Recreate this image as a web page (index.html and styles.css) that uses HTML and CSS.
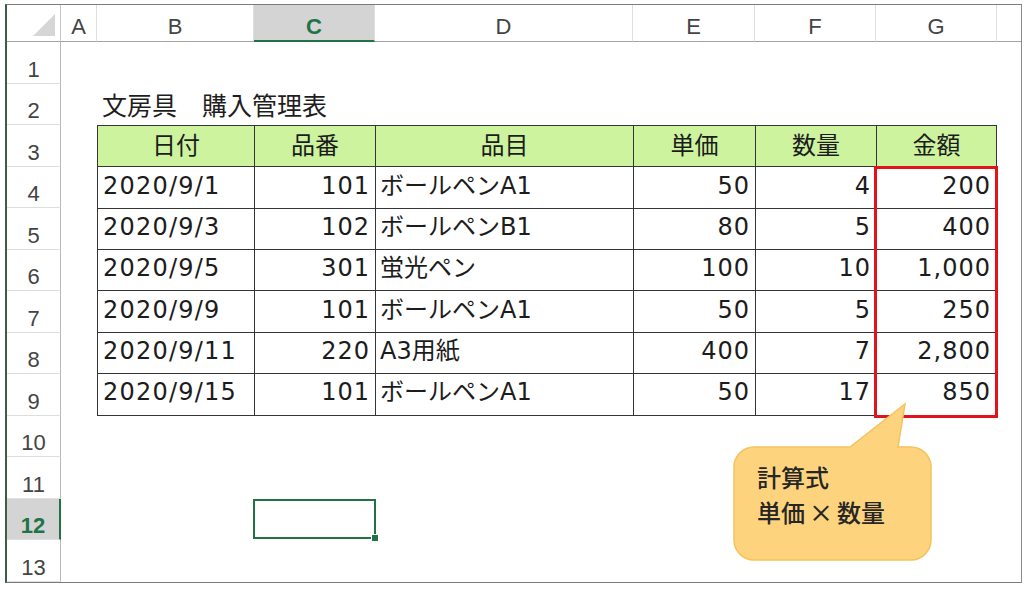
FILE: index.html
```html
<!DOCTYPE html>
<html lang="ja">
<head>
<meta charset="utf-8">
<title>文房具 購入管理表</title>
<link rel="stylesheet" href="styles.css">
</head>
<body>
<div class="frame">
  <div class="sheet">
    <div class="corner"><span class="tri"></span></div>
    <div class="colhdr">A</div>
    <div class="colhdr">B</div>
    <div class="colhdr active">C</div>
    <div class="colhdr">D</div>
    <div class="colhdr">E</div>
    <div class="colhdr">F</div>
    <div class="colhdr">G</div>
    <div class="colhdr last"></div>

    <div class="rowhdr">1</div>
    <div class="rowhdr">2</div>
    <div class="rowhdr">3</div>
    <div class="rowhdr">4</div>
    <div class="rowhdr">5</div>
    <div class="rowhdr">6</div>
    <div class="rowhdr">7</div>
    <div class="rowhdr">8</div>
    <div class="rowhdr">9</div>
    <div class="rowhdr">10</div>
    <div class="rowhdr">11</div>
    <div class="rowhdr active">12</div>
    <div class="rowhdr">13</div>

    <div class="title">文房具　購入管理表</div>

    <div class="table">
      <div class="th">日付</div>
      <div class="th">品番</div>
      <div class="th">品目</div>
      <div class="th">単価</div>
      <div class="th">数量</div>
      <div class="th">金額</div>

      <div class="td num-l">2020/9/1</div>
      <div class="td num">101</div>
      <div class="td txt">ボールペンA1</div>
      <div class="td num">50</div>
      <div class="td num">4</div>
      <div class="td num">200</div>

      <div class="td num-l">2020/9/3</div>
      <div class="td num">102</div>
      <div class="td txt">ボールペンB1</div>
      <div class="td num">80</div>
      <div class="td num">5</div>
      <div class="td num">400</div>

      <div class="td num-l">2020/9/5</div>
      <div class="td num">301</div>
      <div class="td txt">蛍光ペン</div>
      <div class="td num">100</div>
      <div class="td num">10</div>
      <div class="td num">1,000</div>

      <div class="td num-l">2020/9/9</div>
      <div class="td num">101</div>
      <div class="td txt">ボールペンA1</div>
      <div class="td num">50</div>
      <div class="td num">5</div>
      <div class="td num">250</div>

      <div class="td num-l">2020/9/11</div>
      <div class="td num">220</div>
      <div class="td txt">A3用紙</div>
      <div class="td num">400</div>
      <div class="td num">7</div>
      <div class="td num">2,800</div>

      <div class="td num-l">2020/9/15</div>
      <div class="td num">101</div>
      <div class="td txt">ボールペンA1</div>
      <div class="td num">50</div>
      <div class="td num">17</div>
      <div class="td num">850</div>
    </div>

    <div class="redbox"></div>

    <div class="selection"><span class="handle"></span></div>

    <div class="callout">
      <svg class="callout-shape" width="200" height="160" viewBox="0 0 200 160">
        <path d="M 21 45 H 117 L 172 2 L 165 45 H 178 A 20 20 0 0 1 198 65 V 138 A 20 20 0 0 1 178 158 H 21 A 20 20 0 0 1 1 138 V 65 A 20 20 0 0 1 21 45 Z" fill="#fdd47d" stroke="#f4c25e" stroke-width="1.5"/>
      </svg>
      <div class="callout-text">
        <div>計算式</div>
        <div>単価<span class="times">×</span>数量</div>
      </div>
    </div>
  </div>
</div>
</body>
</html>
```

FILE: styles.css
```css
html, body {
  margin: 0;
  padding: 0;
  background: #ffffff;
}

.frame {
  margin: 4px 0 0 5px;
  width: 1014px;
  border-top: 1px solid #7c7c7c;
  border-right: 1px solid #8a8a8a;
  border-bottom: 1px solid #7c7c7c;
  border-left: 2px solid #3e5c48;
}

.sheet {
  position: relative;
  display: grid;
  grid-template-columns: 54px 36px 157px 121px 258px 122px 121px 121px 1fr;
  grid-template-rows: 37px repeat(13, 41.5px);
  background: #ffffff;
}

.corner {
  grid-row: 1;
  display: flex;
  justify-content: flex-end;
  align-items: flex-end;
  padding: 0 5px 5px 0;
  border-right: 1px solid #c6c6c6;
  border-bottom: 1px solid #a3a3a3;
  box-sizing: border-box;
}

.tri {
  width: 22px;
  height: 22px;
  background: #d6d6d6;
  clip-path: polygon(100% 0, 100% 100%, 0 100%);
}

.colhdr {
  grid-row: 1;
  display: flex;
  justify-content: center;
  align-items: flex-end;
  padding-bottom: 2px;
  box-sizing: border-box;
  border-right: 1px solid #dedede;
  border-bottom: 1px solid #a3a3a3;
  font-family: "Liberation Sans", Arial, sans-serif;
  font-size: 22px;
  line-height: 25px;
  color: #444444;
}

.colhdr.last {
  border-right: none;
}

.colhdr.active {
  background: #d4d4d4;
  border-bottom: 2px solid #217346;
  color: #217346;
  font-weight: bold;
  padding-bottom: 1px;
}

.rowhdr {
  grid-column: 1;
  display: flex;
  justify-content: center;
  align-items: flex-end;
  padding-bottom: 1px;
  box-sizing: border-box;
  border-bottom: 1px solid #dedede;
  border-right: 1px solid #b8b8b8;
  font-family: "Liberation Sans", Arial, sans-serif;
  font-size: 22px;
  line-height: 25px;
  color: #444444;
}

.rowhdr.active {
  background: #d4d4d4;
  border-right: 2px solid #217346;
  color: #217346;
  font-weight: bold;
}

.title {
  grid-column: 3 / 7;
  grid-row: 3;
  display: flex;
  align-items: center;
  padding-left: 5px;
  font-family: "Noto Sans CJK JP", sans-serif;
  font-size: 25px;
  color: #1e1e1e;
}

.table {
  grid-column: 3 / 9;
  grid-row: 4 / 11;
  display: grid;
  grid-template-columns: 156px 120px 257px 121px 120px 1fr;
  grid-template-rows: repeat(7, 1fr);
  gap: 1px;
  padding: 1px;
  background: #353535;
  font-family: "DejaVu Sans", "Noto Sans CJK JP", sans-serif;
  font-size: 24px;
  color: #1c1c1c;
}

.th,
.td {
  display: flex;
  align-items: center;
  padding: 0 6px 4px 6px;
  background: #ffffff;
  white-space: nowrap;
  line-height: 28px;
}

.th {
  justify-content: center;
  background: #cdf39e;
  font-family: "Noto Sans CJK JP", sans-serif;
}

.td.num {
  justify-content: flex-end;
  letter-spacing: 1px;
  padding-right: 5px;
}

.td.num-l {
  letter-spacing: 1.2px;
  padding-left: 5px;
}

.td.txt {
  padding-left: 4px;
}

.redbox {
  grid-column: 8;
  grid-row: 5 / 11;
  margin: -1px -1px -2px -2px;
  border: 3px solid #e3131c;
}

.selection {
  grid-column: 4;
  grid-row: 13;
  position: relative;
  margin: 0 -1px 1px -1px;
  border: 2px solid #217346;
}

.handle {
  position: absolute;
  right: -5px;
  bottom: -5px;
  width: 8px;
  height: 8px;
  background: #217346;
  border: 1px solid #ffffff;
  box-sizing: border-box;
}

.callout {
  position: absolute;
  left: 726px;
  top: 397px;
  width: 200px;
  height: 160px;
}

.callout-shape {
  position: absolute;
  left: 0;
  top: 0;
  display: block;
}

.callout-text {
  position: relative;
  padding: 57px 0 0 24px;
  font-family: "Noto Sans CJK JP", sans-serif;
  font-size: 24px;
  font-weight: 500;
  line-height: 35px;
  color: #262626;
}

.times {
  display: inline-block;
  margin: 0 4px;
}
```
